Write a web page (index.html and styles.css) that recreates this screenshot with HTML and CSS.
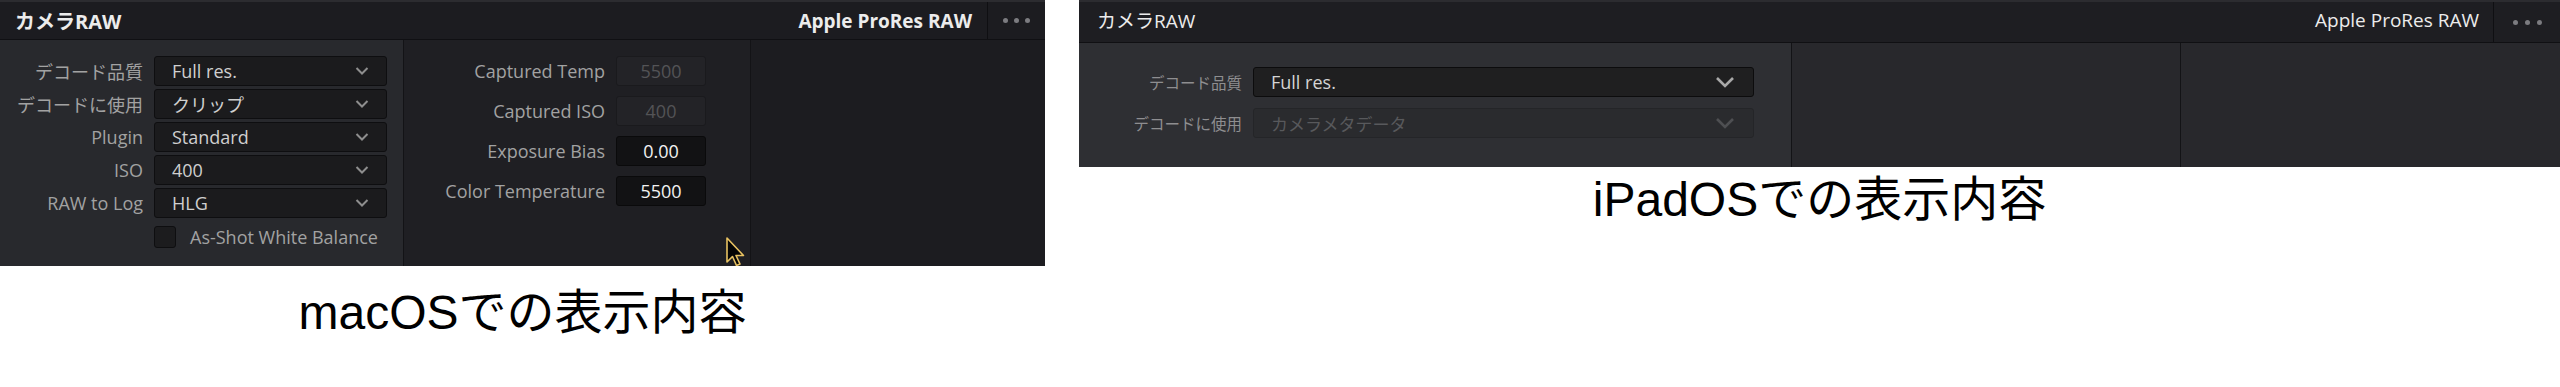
FILE: index.html
```html
<!DOCTYPE html>
<html lang="ja">
<head>
  <meta charset="UTF-8" />
  <title>カメラRAW 表示比較</title>
  <link rel="stylesheet" href="styles.css">
</head>
<body>
  <div class="page">
    <section class="shot mac">
      <div class="panel">
        <div class="panel-head">
          <span class="title">カメラRAW</span>
          <span class="codec">Apple ProRes RAW</span>
          <span class="more"><i></i><i></i><i></i></span>
        </div>
        <div class="panel-body">
          <div class="col col-a">
            <div class="form">
              <label>デコード品質</label>
              <div class="select"><span>Full res.</span><svg viewBox="0 0 14 10"><path d="M1.5 2 L7 7.5 L12.5 2" /></svg></div>
              <label>デコードに使用</label>
              <div class="select"><span>クリップ</span><svg viewBox="0 0 14 10"><path d="M1.5 2 L7 7.5 L12.5 2" /></svg></div>
              <label>Plugin</label>
              <div class="select"><span>Standard</span><svg viewBox="0 0 14 10"><path d="M1.5 2 L7 7.5 L12.5 2" /></svg></div>
              <label>ISO</label>
              <div class="select"><span>400</span><svg viewBox="0 0 14 10"><path d="M1.5 2 L7 7.5 L12.5 2" /></svg></div>
              <label>RAW to Log</label>
              <div class="select"><span>HLG</span><svg viewBox="0 0 14 10"><path d="M1.5 2 L7 7.5 L12.5 2" /></svg></div>
              <span></span>
              <div class="check"><span class="box"></span>As-Shot White Balance</div>
            </div>
          </div>
          <div class="col col-b">
            <div class="form">
              <label>Captured Temp</label>
              <div class="field off">5500</div>
              <label>Captured ISO</label>
              <div class="field off">400</div>
              <label>Exposure Bias</label>
              <div class="field">0.00</div>
              <label>Color Temperature</label>
              <div class="field">5500</div>
            </div>
          </div>
          <div class="col col-c"></div>
        </div>
        <svg class="cursor" viewBox="0 0 22 32"><path d="M2 2 L2 26 L7.5 20.5 L11.5 29.5 L15 28 L11 19.5 L18.5 19.5 Z" /></svg>
      </div>
      <p class="caption">macOSでの表示内容</p>
    </section>

    <section class="shot ipad">
      <div class="panel">
        <div class="panel-head">
          <span class="title">カメラRAW</span>
          <span class="codec">Apple ProRes RAW</span>
          <span class="more"><i></i><i></i><i></i></span>
        </div>
        <div class="panel-body">
          <div class="col col-a">
            <div class="form">
              <label>デコード品質</label>
              <div class="select"><span>Full res.</span><svg viewBox="0 0 20 14"><path d="M2 3 L10 11 L18 3" /></svg></div>
              <label>デコードに使用</label>
              <div class="select off"><span>カメラメタデータ</span><svg viewBox="0 0 20 14"><path d="M2 3 L10 11 L18 3" /></svg></div>
            </div>
          </div>
          <div class="col col-b"></div>
          <div class="col col-c"></div>
        </div>
      </div>
      <p class="caption">iPadOSでの表示内容</p>
    </section>
  </div>
</body>
</html>
```

FILE: styles.css
```css
body {
  margin: 0;
  background: #fff;
  font-family: "Open Sans", "Noto Sans CJK JP", sans-serif;
}
.page {
  display: flex;
  gap: 34px;
  align-items: flex-start;
}
.shot {
  display: flex;
  flex-direction: column;
}
.mac { width: 1045px; }
.ipad { width: 1481px; }

.panel {
  position: relative;
  overflow: hidden;
  display: flex;
  flex-direction: column;
  background: #28282c;
  border-top: 2px solid #2c2c30;
}
.mac .panel { height: 264px; }
.ipad .panel { height: 165px; }

/* header bar */
.panel-head {
  display: flex;
  align-items: center;
  background: #1c1c20;
  border-bottom: 1px solid #101013;
  color: #ececec;
}
.mac .panel-head { height: 37px; }
.ipad .panel-head {
  height: 40px;
  background: #1e1e22;
}
.panel-head .title {
  flex: 1;
  font-size: 19px;
  padding-left: 15px;
}
.mac .panel-head .title {
  font-size: 20px;
  font-weight: 700;
}
.ipad .panel-head .title,
.ipad .panel-head .codec { padding-bottom: 4px; }
.ipad .panel-head .title { padding-left: 18px; }
.panel-head .codec {
  font-size: 19px;
  font-weight: 700;
  padding-right: 15px;
}
.ipad .panel-head .codec {
  font-weight: 400;
  padding-right: 14px;
}
.more {
  align-self: stretch;
  display: flex;
  align-items: center;
  justify-content: center;
  gap: 6px;
  width: 57px;
  border-left: 1px solid #0f0f12;
}
.ipad .more { width: 66px; gap: 7px; }
.more i {
  width: 5px;
  height: 5px;
  border-radius: 50%;
  background: #7c7c80;
}

/* body columns */
.panel-body {
  flex: 1;
  display: flex;
}
.col { border-right: 1px solid #131316; }
.col:last-child { border-right: none; }
.mac .col-a { width: 403px; background: #28292d; }
.mac .col-b { width: 346px; background: #1f1f23; }
.mac .col-c { flex: 1; background: #1c1c20; }
.ipad .col-a { width: 712px; background: #2e2f33; }
.ipad .col-b { width: 388px; background: #28282c; }
.ipad .col-c { flex: 1; background: #28282c; }

.form {
  display: grid;
  align-items: center;
  column-gap: 11px;
}
.form label {
  text-align: right;
  white-space: nowrap;
  color: #a2a2a2;
  font-size: 18px;
}
.mac .col-a .form {
  grid-template-columns: 143px 233px;
  row-gap: 3px;
  padding-top: 16px;
}
.mac .col-b .form {
  grid-template-columns: 1fr 90px;
  row-gap: 10px;
  padding: 16px 44px 0 0;
}
.ipad .col-a .form {
  grid-template-columns: 163px 501px;
  row-gap: 11px;
  padding-top: 24px;
}
.ipad .form label {
  font-size: 15.5px;
  color: #8e8e90;
}

/* dropdowns */
.select {
  height: 28px;
  display: flex;
  align-items: center;
  justify-content: space-between;
  padding: 0 17px;
  background: #1b1b1d;
  border: 1px solid #0e0e10;
  border-radius: 3px;
  color: #cfcfcf;
  font-size: 18px;
}
.select svg {
  width: 14px;
  height: 10px;
  fill: none;
  stroke: #8e8e8e;
  stroke-width: 2;
}
.ipad .select {
  padding: 0 18px 0 17px;
  background: #1f1f20;
  border-color: #0c0c0d;
  color: #d4d4d4;
}
.ipad .select svg {
  width: 20px;
  height: 14px;
  stroke: #a8a8a8;
  stroke-width: 2.6;
}
.ipad .select.off {
  background: #2a2b2e;
  border-color: #242528;
  color: #58595c;
  font-size: 17px;
}
.ipad .select.off svg { stroke: #4e4f52; }

.check {
  display: flex;
  align-items: center;
  gap: 14px;
  margin-top: 4px;
  color: #a2a2a2;
  font-size: 18px;
  white-space: nowrap;
}
.check .box {
  width: 20px;
  height: 20px;
  background: #1c1c1e;
  border: 1px solid #0e0e10;
  border-radius: 3px;
}

/* number fields */
.field {
  height: 28px;
  line-height: 28px;
  text-align: center;
  background: #121214;
  border: 1px solid #0a0a0b;
  border-radius: 3px;
  color: #f2f2f2;
  font-size: 18px;
}
.field.off {
  background: #232327;
  border-color: #1a1a1d;
  color: #535356;
}

.cursor {
  position: absolute;
  left: 725px;
  top: 234px;
  width: 22px;
  height: 32px;
}
.cursor path {
  fill: #050505;
  stroke: #e8c262;
  stroke-width: 1.6;
  stroke-linejoin: round;
}

.caption {
  margin: 0;
  text-align: center;
  font-family: "Liberation Sans", "Noto Sans CJK JP", sans-serif;
  font-size: 48px;
  line-height: 56px;
  color: #000;
}
.mac .caption { margin-top: 19px; }
.ipad .caption { margin-top: 5px; }
```
